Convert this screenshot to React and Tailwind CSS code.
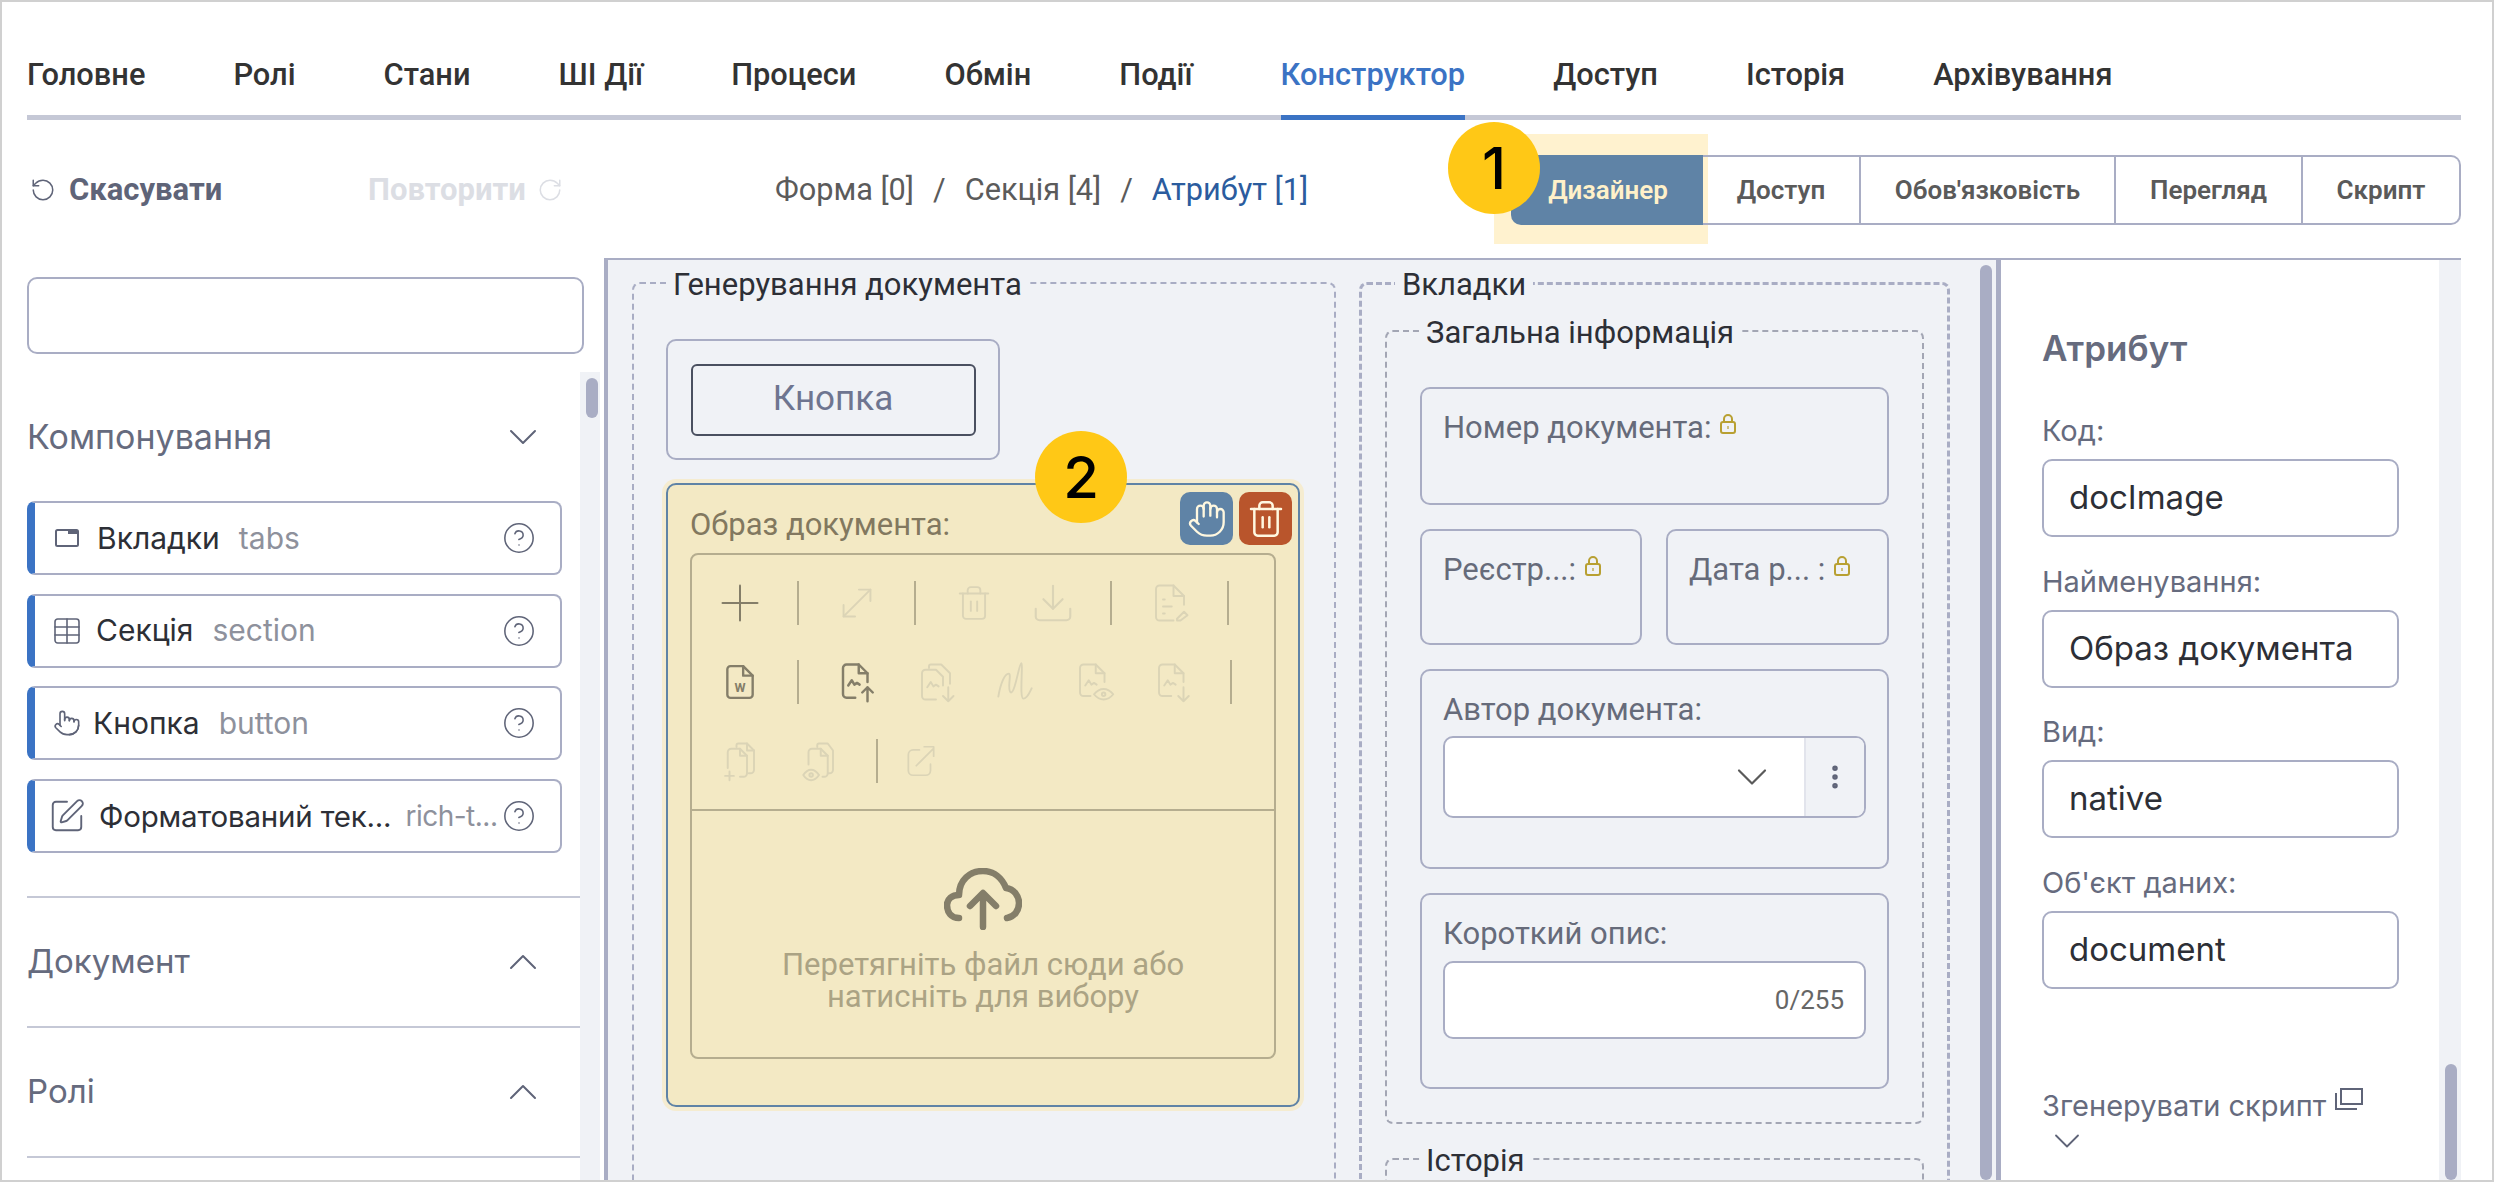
import React from 'react';
import { Plus, MoveDiagonal, Trash2, Download, Hand, Pointer, SquarePen, Table, CircleHelp, RotateCcw, RotateCw, ChevronDown, ChevronUp, EllipsisVertical } from 'lucide-react';

const tabs = ['Головне', 'Ролі', 'Стани', 'ШІ Дії', 'Процеси', 'Обмін', 'Події', 'Конструктор', 'Доступ', 'Історія', 'Архівування'];

const FILE = 'M14 2H6a2 2 0 0 0-2 2v16a2 2 0 0 0 2 2h12a2 2 0 0 0 2-2V8z';

const Svg = ({ children, size = 42, sw = 1.1 }) => (
  <svg width={size} height={size} viewBox="0 0 24 24" fill="none" stroke="currentColor" strokeWidth={sw} strokeLinecap="round" strokeLinejoin="round" className="shrink-0">
    {children}
  </svg>
);

const Wave = ({ x = 0, y = 0 }) => <path d={`M${7 + x} ${14 + y}l2-3 1.5 2.5 1.5-1 1.5 1`} />;

// toolbar row content, order as in the picture
const tools = [
  { icon: <Plus size={60} strokeWidth={0.8} className="shrink-0" />, on: true },
  'sep',
  { icon: <MoveDiagonal size={46} strokeWidth={1} className="shrink-0" /> },
  'sep',
  { icon: <Trash2 size={38} strokeWidth={1.2} className="shrink-0" /> },
  { icon: <Download size={46} strokeWidth={1.1} className="shrink-0" /> },
  'sep',
  { icon: <Svg><path d="M20 13V8l-6-6H6a2 2 0 0 0-2 2v16a2 2 0 0 0 2 2h8" /><path d="M14 2v6h6M8 10h1M8 14h5M8 18h1" /><path d="M16 21l4-4 2 2-4 3h-2z" /></Svg> },
  'sep',
  { icon: <Svg size={38} sw={1.5}><path d={FILE} /><path d="M14 2v6h6" /><text x="12" y="18.5" fontSize="8" fontWeight="700" textAnchor="middle" fill="currentColor" stroke="none" fontFamily="Roboto, sans-serif">W</text></Svg>, on: true },
  'sep',
  { icon: <Svg sw={1.4}><path d="M11 21H6a2 2 0 0 1-2-2V4a2 2 0 0 1 2-2h7l5 5v5" /><path d="M13 2v5h5" /><Wave /><path d="M18 23v-8M15 18l3-3 3 3" /></Svg>, on: true },
  { icon: <Svg><path d="M8 4V3a1 1 0 0 1 1-1h6l5 5v6" /><path d="M12 22H6a2 2 0 0 1-2-2V7a2 2 0 0 1 2-2h6l4 4v5" /><Wave y={1} /><path d="M19 15v8M16 20l3 3 3-3" /></Svg> },
  { icon: <Svg size={50} sw={0.9}><path d="M4 19c1-6 3-11 5-11 1.500 0-1 8 1 9 2 .5 4-14 5-14s-1 17 1 17 3-3 4-5" /></Svg> },
  { icon: <Svg><path d="M10 20H6a2 2 0 0 1-2-2V4a2 2 0 0 1 2-2h7l5 5v5" /><path d="M13 2v5h5" /><Wave /><path d="M12 19s2.500-3 5.500-3 5.500 3 5.500 3-2.500 3-5.500 3-5.500-3-5.500-3z" /><circle cx="17.500" cy="19" r="1" /></Svg> },
  { icon: <Svg><path d="M11 20H6a2 2 0 0 1-2-2V4a2 2 0 0 1 2-2h7l5 5v5" /><path d="M13 2v5h5" /><Wave /><path d="M18 15v8M15 20l3 3 3-3" /></Svg> },
  'sep',
  { icon: <Svg><path d="M10 4V3a1 1 0 0 1 1-1h5l4 4v11a2 2 0 0 1-2 2h-1" /><path d="M16 2v4h4" /><path d="M5 16V7a2 2 0 0 1 2-2h5l4 4v10a2 2 0 0 1-2 2h-2" /><path d="M12 5v4h4" /><path d="M6 18v5M3.500 20.500h5" /></Svg> },
  { icon: <Svg><path d="M11 4V3a1 1 0 0 1 1-1h5l3 4v11a2 2 0 0 1-2 2h-1" /><path d="M6 14V7a2 2 0 0 1 2-2h5l4 4v10a2 2 0 0 1-2 2h-1" /><path d="M13 5v4h4" /><path d="M3 20s2-3 4.500-3 4.500 3 4.500 3-2 3-4.500 3-4.500-3-4.500-3z" /><circle cx="7.500" cy="20" r="1" /></Svg> },
  'sep',
  { icon: <Svg size={38}><path d="M11 5H7a3 3 0 0 0-3 3v10a3 3 0 0 0 3 3h8a3 3 0 0 0 3-3v-4" /><path d="M9 15L20 4M14 3h6v6" /></Svg>, shift: 'ml-[-15px]' },
];

const segments = [
  { label: 'Доступ', w: 'w-[158px]' },
  { label: "Обов'язковість", w: 'w-[255px]' },
  { label: 'Перегляд', w: 'w-[187px]' },
  { label: 'Скрипт', w: 'flex-1' },
];

const components = [
  { name: 'Вкладки', code: 'tabs', nameCls: 'ml-[16px] text-[30px]', icon: <svg width="26" height="20" viewBox="0 0 26 20" fill="none" stroke="#5f6478" strokeWidth="2" className="shrink-0"><rect x="2" y="2" width="22" height="16" rx="1.500" /><rect x="14" y="2" width="10" height="4" fill="#5f6478" stroke="none" /></svg> },
  { name: 'Секція', code: 'section', nameCls: 'ml-[15px] text-[30px]', icon: <Table size={32} strokeWidth={1.2} color="#5f6478" className="shrink-0" /> },
  { name: 'Кнопка', code: 'button', nameCls: 'ml-[12px] text-[30px]', icon: <Pointer size={28} strokeWidth={1.4} color="#5f6478" className="shrink-0" /> },
  { name: 'Форматований тек...', code: 'rich-t...', nameCls: 'ml-[18px] text-[29.500px] tracking-[-0.2px]', codeCls: 'ml-[14px] text-[28px] tracking-[-0.5px]', icon: <SquarePen size={38} strokeWidth={1.2} color="#5f6478" className="shrink-0" /> },
];

const attrs = [
  { label: 'Код:', value: 'docImage' },
  { label: 'Найменування:', value: 'Образ документа' },
  { label: 'Вид:', value: 'native' },
  { label: "Об'єкт даних:", value: 'document' },
];

const Badge = ({ n, className }) => (
  <span className={`absolute z-20 flex h-[92px] w-[92px] items-center justify-center rounded-full bg-[#ffc816] font-['Inter',sans-serif] text-[58px] font-medium leading-none text-black ${className}`}>
    {n}
  </span>
);

const Section = ({ title }) => (
  <div className="flex h-[130px] items-center justify-between border-b-2 border-[#c5c8d6] pr-[33px]">
    <span className="text-[33px] text-[#666b7e]">{title}</span>
    <ChevronUp size={48} strokeWidth={1} color="#5f6478" />
  </div>
);

const LockedCard = ({ label, className }) => (
  <div className={`h-full rounded-[10px] border-2 border-[#a9adc4] pl-[21px] pt-[23px] ${className}`}>
    <span className="flex items-start text-[31px] leading-[32px] text-[#666b7a]">
      {label}
      <svg width="18" height="22" viewBox="0 0 18 22" fill="none" stroke="#b8a032" strokeWidth="2" className="ml-[8px] mt-[1px] shrink-0">
        <rect x="2" y="9" width="14" height="11" rx="2" />
        <path d="M5 9V6a4 4 0 0 1 8 0v3" />
        <path d="M9 13v3" strokeWidth="1.200" />
      </svg>
    </span>
  </div>
);

export default function App() {
  return (
    <div className="relative flex h-[1182px] w-[2494px] flex-col overflow-hidden border-2 border-[#d0d0d0] bg-white font-['Inter',sans-serif]">
      {/* tabs */}
      <div className="ml-[25px] mr-[31px] flex h-[118px] shrink-0 gap-[88px] border-b-[5px] border-[#c5c8d6] font-['Roboto',sans-serif] text-[30.800px] font-medium text-[#333]">
        {tabs.map((t) => (
          <div key={t} className={`h-[118px] pt-[57px] leading-[32px] ${t === 'Конструктор' ? 'border-b-[5px] border-[#3b73c4] text-[#3b73c4]' : ''}`}>
            {t}
          </div>
        ))}
      </div>

      {/* toolbar */}
      <div className="flex h-[138px] shrink-0 items-start font-['Roboto',sans-serif]">
        <div className="ml-[28px] mt-[54px] flex w-[338px] items-center gap-[13px] text-[31px] font-bold leading-[32px] text-[#5f6478]">
          <RotateCcw size={26} strokeWidth={1.4} />
          Скасувати
        </div>
        <div className="mt-[54px] flex w-[407px] items-center gap-[11px] text-[31px] font-bold leading-[32px] text-[#dcdee4]">
          Повторити
          <RotateCw size={26} strokeWidth={1.4} />
        </div>
        <div className="mt-[54px] flex w-[736px] text-[30.700px] leading-[32px] text-[#5b5b5b]">
          <span>Форма [0]</span>
          <span className="mx-[19px]">/</span>
          <span>Секція [4]</span>
          <span className="mx-[19px]">/</span>
          <span className="text-[#2b5c9e]">Атрибут [1]</span>
        </div>
        <div className="relative mt-[35px] flex h-[70px] w-[950px] text-[26px] font-semibold text-[#5a5a5a]">
          <span className="absolute bottom-[-19px] left-[-17px] top-[-21px] w-[214px] bg-[#fff2cf]"></span>
          <Badge n="1" className="left-[-63px] top-[-33px]" />
          <div className="relative flex w-[192px] items-center justify-center rounded-l-[10px] bg-[#5f83a6] pl-[2px] text-[#fff1c9]">Дизайнер</div>
          <div className="relative flex flex-1 rounded-r-[10px] border-2 border-l-0 border-[#a9adc4]">
            {segments.map((s, i) => (
              <div key={s.label} className={`flex items-center justify-center ${s.w} ${i < 3 ? 'border-r-2 border-[#a9adc4]' : ''}`}>
                {s.label}
              </div>
            ))}
          </div>
        </div>
      </div>

      <div className="flex min-h-0 flex-1">
        {/* left sidebar */}
        <div className="flex w-[602px] shrink-0 flex-col">
          <div className="ml-[25px] mt-[19px] h-[77px] w-[557px] shrink-0 rounded-[10px] border-2 border-[#a9adc4]"></div>
          <div className="mt-[18px] flex min-h-0 flex-1">
            <div className="ml-[25px] flex-1">
              <div className="flex h-[129px] items-center justify-between pr-[33px]">
                <span className="text-[34px] text-[#666b7e]">Компонування</span>
                <ChevronDown size={48} strokeWidth={1} color="#5f6478" />
              </div>
              <div className="flex flex-col gap-[18.600px] border-b-2 border-[#c5c8d6] pb-[43px]">
                {components.map((c) => (
                  <div key={c.code} className="flex h-[74px] w-[535px] items-center rounded-[8px] border-2 border-l-[8px] border-[#a9adc4] border-l-[#3b73c4] pl-[18px] pr-[24px]">
                    <span className="flex w-[28px] shrink-0 justify-center">{c.icon}</span>
                    <span className={`${c.nameCls} whitespace-nowrap text-[#2d2f36]`}>{c.name}</span>
                    <span className={`${c.codeCls || 'ml-[19px] text-[30px]'} whitespace-nowrap text-[#8e919c]`}>{c.code}</span>
                    <CircleHelp size={34} strokeWidth={1.1} color="#5f6478" className="ml-auto shrink-0" />
                  </div>
                ))}
              </div>
              <Section title="Документ" />
              <Section title="Ролі" />
            </div>
            <div className="relative mr-[4px] w-[20px] shrink-0 bg-[#f0f2f6]">
              <div className="absolute left-[6px] top-[6px] h-[40px] w-[12px] rounded-full bg-[#a9adc4]"></div>
            </div>
          </div>
        </div>

        {/* canvas */}
        <div className="relative flex min-w-0 flex-1 items-start gap-[23px] overflow-hidden border-l-4 border-r-[5px] border-t-2 border-[#a9adc4] bg-[#f0f2f6] pl-[24px] pt-[5px] font-['Roboto',sans-serif]">
          <div className="absolute bottom-0 right-[4px] top-[5px] w-[12px] rounded-full bg-[#a9adc4]"></div>

          <fieldset className="h-[1100px] w-[704px] shrink-0 rounded-[8px] border-[2px] border-dashed border-[#a9adc4] pl-[32px]">
            <legend className="px-[7px] pt-[4px] text-[31px] leading-[32px] text-[#2d2f36]">Генерування документа</legend>
            <div className="mt-[38px] flex h-[121px] w-[334px] items-center justify-center rounded-[10px] border-2 border-[#a9adc4]">
              <div className="flex h-[72px] w-[285px] items-center justify-center rounded-[6px] border-2 border-[#4a5060] text-[35px] text-[#6e7590]">Кнопка</div>
            </div>
            <div className="relative mt-[23px] h-[624px] w-[634px] rounded-[10px] border-2 border-[#5f83a6] bg-[#f3e9c4] pl-[22px] shadow-[0_0_0_4px_#f5ecd0]">
              <Badge n="2" className="left-[367px] top-[-54px]" />
              <div className="absolute left-[512px] top-[7px] flex gap-[6px] text-[#fff8e0]">
                <span className="flex h-[53px] w-[53px] items-center justify-center rounded-[10px] bg-[#5f83a6]"><Hand size={40} strokeWidth={1.4} /></span>
                <span className="flex h-[53px] w-[53px] items-center justify-center rounded-[10px] bg-[#b9552c]"><Trash2 size={40} strokeWidth={1.5} /></span>
              </div>
              <div className="pt-[24px] text-[31px] leading-[32px] text-[#82785f]">Образ документа:</div>
              <div className="mt-[12px] w-[586px] rounded-[8px] border-2 border-[#b5ad8f]">
                <div className="flex flex-wrap items-center border-b-2 border-[#b5ad8f] px-[8px] pb-[9px] pt-[8px]">
                  {tools.map((t, i) =>
                    typeof t === 'string' ? (
                      <span key={i} className="mx-[18px] h-[44px] w-[2px] bg-[#b5ad8f]"></span>
                    ) : (
                      <span key={i} className={`flex h-[79px] w-[79px] items-center justify-center ${t.shift || ''} ${t.on ? 'text-[#847e69]' : 'text-[#dbd4b6]'}`}>{t.icon}</span>
                    )
                  )}
                </div>
                <div className="flex h-[246px] flex-col items-center pt-[57px]">
                  <svg width="78" height="62" viewBox="0 0 78 62" fill="none" stroke="#847e69" strokeWidth="6.500" strokeLinecap="round" strokeLinejoin="round">
                    <path d="M15 50C7 50 3 44 3 37C3 31 8 27 15 27C15 12 26 3 39 3C50 3 58 10 62 20C70 21 75 28 75 35C75 43 70 49 63 50" />
                    <path d="M39 59V26M26 38L39 25L52 38" />
                  </svg>
                  <div className="mt-[19px] text-center text-[31px] leading-[32px] text-[#aba384]">
                    Перетягніть файл сюди або<br />натисніть для вибору
                  </div>
                </div>
              </div>
            </div>
          </fieldset>

          <fieldset className="h-[1100px] w-[591px] shrink-0 rounded-[8px] border-[3px] border-dashed border-[#a9adc4] pl-[23px]">
            <legend className="ml-[10px] px-[7px] pt-[4px] text-[31px] leading-[32px] text-[#2d2f36]">Вкладки</legend>
            <fieldset className="mt-[12px] h-[811px] w-[539px] rounded-[8px] border-[2px] border-dashed border-[#a3a6b4] pl-[33px] pt-[38px]">
              <legend className="px-[6px] pt-[4px] text-[31px] leading-[32px] text-[#2d2f36]">Загальна інформація</legend>
              <div className="flex w-[469px] flex-col gap-[24px]">
                <div className="h-[118px]"><LockedCard label="Номер документа:" /></div>
                <div className="flex h-[116px] gap-[24px]">
                  <LockedCard label="Реєстр...:" className="w-[222px]" />
                  <LockedCard label="Дата р... :" className="w-[223px]" />
                </div>
                <div className="h-[200px] rounded-[10px] border-2 border-[#a9adc4] px-[21px] pt-[23px]">
                  <div className="text-[31px] leading-[32px] text-[#666b7a]">Автор документа:</div>
                  <div className="mt-[10px] flex h-[82px] overflow-hidden rounded-[10px] border-2 border-[#a9adc4] bg-white">
                    <div className="flex flex-1 items-center justify-end pr-[26px]"><ChevronDown size={52} strokeWidth={1} color="#5a5a5a" /></div>
                    <div className="flex w-[60px] items-center justify-center border-l-2 border-[#e2e4ec] bg-[#f0f2f6]"><EllipsisVertical size={30} strokeWidth={2.4} color="#5f6478" /></div>
                  </div>
                </div>
                <div className="h-[196px] rounded-[10px] border-2 border-[#a9adc4] px-[21px] pt-[23px]">
                  <div className="text-[31px] leading-[32px] text-[#666b7a]">Короткий опис:</div>
                  <div className="mt-[11px] flex h-[78px] items-center justify-end rounded-[10px] border-2 border-[#a9adc4] bg-white pr-[20px] text-[26px] text-[#666]">0/255</div>
                </div>
              </div>
            </fieldset>
            <fieldset className="mt-[17px] h-[100px] w-[539px] rounded-[8px] border-[2px] border-dashed border-[#a3a6b4]">
              <legend className="ml-[33px] px-[6px] pt-[4px] text-[31px] leading-[32px] text-[#2d2f36]">Історія</legend>
            </fieldset>
          </fieldset>
        </div>

        {/* attribute panel */}
        <div className="mr-[31px] flex w-[460px] shrink-0 border-t-2 border-[#a9adc4]">
          <div className="flex-1 pl-[41px] pt-[68px]">
            <div className="text-[35px] font-semibold leading-[40px] text-[#666b7e]">Атрибут</div>
            <div className="mt-[48px] flex flex-col">
              {attrs.map((a) => (
                <div key={a.label} className="mb-[29.500px]">
                  <div className="text-[29px] leading-[30px] text-[#666b7e]">{a.label}</div>
                  <div className="mt-[13px] flex h-[78px] w-[357px] items-center rounded-[10px] border-2 border-[#a9adc4] pl-[25px] text-[33px] text-[#2d2f36]">{a.value}</div>
                </div>
              ))}
            </div>
            <div className="mt-[73px] flex items-start text-[29px] leading-[30px] text-[#666b7e]">
              Згенерувати скрипт
              <svg width="28" height="22" viewBox="0 0 28 22" fill="none" stroke="#5f6478" strokeWidth="2" className="ml-[9px] mt-[-3px]"><rect x="6" y="1" width="21" height="15" /><path d="M1 5v16h21" /></svg>
            </div>
            <ChevronDown size={44} strokeWidth={1} color="#5f6478" className="ml-[3px] mt-[-2px]" />
          </div>
          <div className="relative w-[22px] shrink-0 bg-[#f0f2f6]">
            <div className="absolute bottom-0 left-[6px] top-[804px] w-[12px] rounded-full bg-[#a9adc4]"></div>
          </div>
        </div>
      </div>
    </div>
  );
}
